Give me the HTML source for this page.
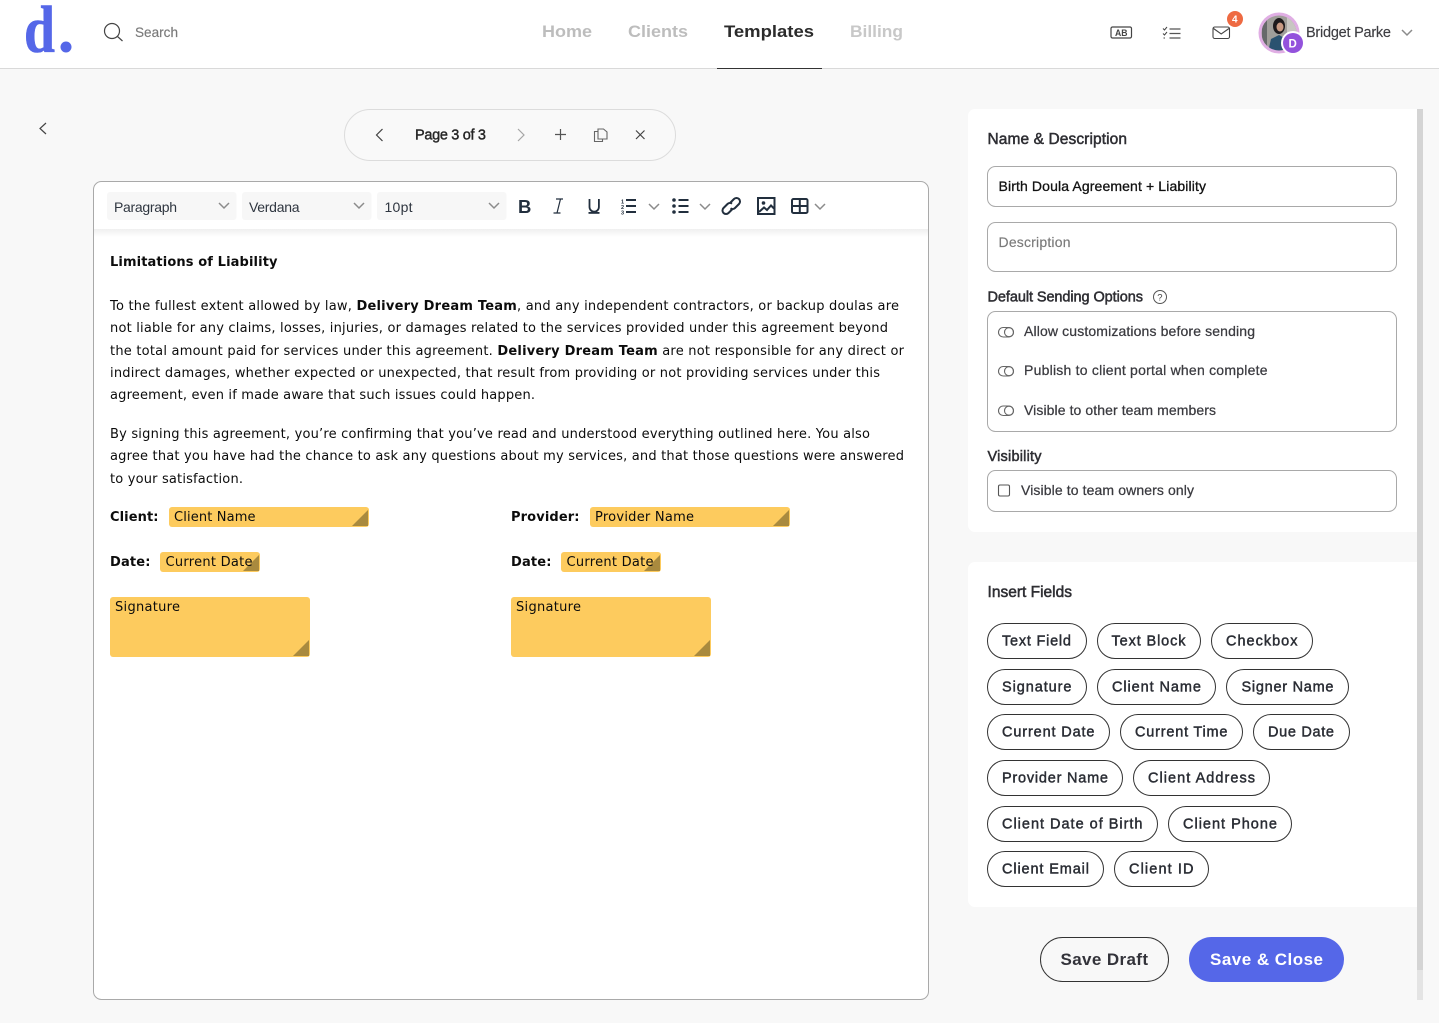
<!DOCTYPE html>
<html lang="en">
<head>
<meta charset="utf-8">
<title>Template Editor</title>
<style>
html,body{margin:0;padding:0;background:#f8f8f8;width:1439px;height:1023px;overflow:hidden}
svg{display:block;position:absolute;left:0;top:0}
text{font-family:"Liberation Sans",Arial,sans-serif;white-space:pre}
.v{font-family:"DejaVu Sans",Verdana,sans-serif;font-size:13px;fill:#0c0c0c}
.v tspan.b,.vb{font-weight:700}
.chip{fill:#fff;stroke:#333;stroke-width:1}
.ct{font-size:14.5px;fill:#2a2d34;stroke:#2a2d34;stroke-width:.45px}
.ic{fill:none;stroke:#444;stroke-width:1.2}
.tb{fill:none;stroke:#222f3e;stroke-width:2}
.chev{fill:none;stroke:#8b8b8b;stroke-width:1.5}
.lab{font-size:14.5px;fill:#2e2e33;stroke:#2e2e33;stroke-width:.5px}
.opt{font-size:14px;fill:#3a3a3f;stroke:#3a3a3f;stroke-width:.25px}
</style>
</head>
<body>
<svg width="1439" height="1023" viewBox="0 0 1439 1023" xmlns="http://www.w3.org/2000/svg">
<defs>
<linearGradient id="sh" x1="0" y1="0" x2="0" y2="1"><stop offset="0" stop-color="#000" stop-opacity=".06"/><stop offset="1" stop-color="#000" stop-opacity="0"/></linearGradient>
<clipPath id="av"><circle cx="1279" cy="33" r="17.5"/></clipPath>
</defs>
<rect width="1439" height="1023" fill="#f8f8f8"/>

<!-- header -->
<rect width="1439" height="68" fill="#fff"/>
<rect y="68" width="1439" height="1" fill="#d9d9d9"/>
<text x="24" y="52" font-size="67" textLength="31" lengthAdjust="spacingAndGlyphs" style="font-family:'Liberation Serif',serif;font-weight:700" fill="#5567e8" stroke="#5567e8" stroke-width=".6">d</text>
<circle cx="66" cy="47" r="5.500" fill="#5567e8"/>
<circle cx="112" cy="31" r="7.500" class="ic"/><path d="M117.500 36.500L122.500 41" class="ic"/>
<text x="135" y="37" font-size="14" textLength="43" lengthAdjust="spacingAndGlyphs" fill="#7a7a7a" stroke="#7a7a7a" stroke-width=".15">Search</text>

<g font-size="17" font-weight="700">
<text x="542" y="37" textLength="50" lengthAdjust="spacingAndGlyphs" fill="#bdbdbd">Home</text>
<text x="628" y="37" textLength="60" lengthAdjust="spacingAndGlyphs" fill="#bdbdbd">Clients</text>
<text x="724" y="37" textLength="90" lengthAdjust="spacingAndGlyphs" fill="#2b2b2b">Templates</text>
<text x="850" y="37" textLength="53" lengthAdjust="spacingAndGlyphs" fill="#c8c8c8">Billing</text>
</g>
<rect x="717" y="68" width="105" height="1" fill="#333"/>

<!-- header icons -->
<rect x="1111" y="27" width="20.500" height="11" rx="1.500" class="ic"/>
<text x="1115" y="36" font-size="9.500" font-weight="700" fill="#444" textLength="12.500" lengthAdjust="spacingAndGlyphs">AB</text>
<path d="M1163 28.500l1.500 1.500 2.500-3M1163 33.500l1.500 1.500 2.500-3M1163.500 38h1.500" fill="none" stroke="#444" stroke-width="1"/>
<path d="M1169.500 29h11M1169.500 33.500h11M1169.500 38h11" fill="none" stroke="#555" stroke-width="1.200"/>
<rect x="1213" y="27" width="16.500" height="11.500" rx="1.800" fill="none" stroke="#444" stroke-width="1.100"/>
<path d="M1213.500 28.500l7.700 5.500 7.800-5.500" fill="none" stroke="#444" stroke-width="1.100"/>
<circle cx="1235" cy="19" r="8" fill="#ee6a42"/>
<text x="1232" y="22.500" font-size="10" font-weight="700" fill="#fff">4</text>

<circle cx="1279" cy="33" r="20.500" fill="#e0aee4"/>
<g clip-path="url(#av)">
<rect x="1260" y="14" width="38" height="38" fill="#a09e9a"/>
<rect x="1287" y="14" width="11" height="38" fill="#c8c6c2"/>
<rect x="1262" y="20" width="5" height="32" fill="#66696a"/>
<ellipse cx="1279" cy="26" rx="6" ry="8" fill="#1e1a1d"/>
<ellipse cx="1280" cy="27" rx="3.500" ry="4.500" fill="#c89a84"/>
<path d="M1268 52l3-13 8-4 9 5 3 12z" fill="#2a5270"/>
</g>
<circle cx="1293" cy="43" r="12" fill="#fff"/>
<circle cx="1293" cy="43" r="10" fill="#9352dc"/>
<text x="1288.500" y="47.500" font-size="11.500" font-weight="700" fill="#fff">D</text>
<text x="1306" y="37" font-size="14.500" textLength="85" fill="#3e3e42" stroke="#3e3e42" stroke-width=".15">Bridget Parke</text>
<path d="M1402 30l5 5 5-5" class="chev" stroke-width="1.200"/>

<!-- back -->
<path d="M46 123l-6 5.500 6 5.500" class="ic"/>

<!-- pager -->
<rect x="344.500" y="109.500" width="331" height="51" rx="25.500" fill="#f9f9f9" stroke="#dcdcdc"/>
<path d="M382.500 129l-6 6 6 6" class="ic"/>
<text x="415" y="139.500" font-size="14.500" textLength="71" fill="#252525" stroke="#252525" stroke-width=".4">Page 3 of 3</text>
<path d="M518 129l6 6-6 6" fill="none" stroke="#a5a5a5" stroke-width="1.200"/>
<path d="M555 134.500h11M560.500 129v11" fill="none" stroke="#555" stroke-width="1.200"/>
<path d="M598 129h5.500l3.500 3v7h-9z" fill="#f9f9f9" stroke="#666" stroke-width="1.100"/>
<path d="M598 131.500h-3.500v10h8v-2.500" fill="none" stroke="#666" stroke-width="1.100"/>
<path d="M636 130.500l8.500 8.500M644.500 130.500l-8.500 8.500" fill="none" stroke="#444" stroke-width="1.200"/>

<!-- editor -->
<rect x="93.500" y="181.500" width="835" height="818" rx="8" fill="#fff" stroke="#a9a9a9"/>
<rect x="94" y="229" width="834" height="8" fill="url(#sh)"/>
<g fill="#f7f7f7">
<rect x="107" y="192" width="129.500" height="28" rx="3"/>
<rect x="242" y="192" width="129.500" height="28" rx="3"/>
<rect x="377" y="192" width="129.500" height="28" rx="3"/>
</g>
<g font-size="14" fill="#2f3640">
<text x="114" y="212" textLength="63">Paragraph</text>
<text x="249" y="212" textLength="50.500">Verdana</text>
<text x="384.500" y="212" textLength="28">10pt</text>
</g>
<path d="M219 203l5 5 5-5M354 203l5 5 5-5M489 203l5 5 5-5" class="chev"/>

<!-- toolbar -->
<text x="518" y="213" font-size="18.500" font-weight="700" fill="#222f3e">B</text>
<path d="M556 199h7M553.500 213h7M560.500 199l-3.500 14" fill="none" stroke="#222f3e" stroke-width="1.200"/>
<path d="M589.500 199v8a4.700 4.700 0 0 0 9.400 0v-8" fill="none" stroke="#222f3e" stroke-width="1.800"/>
<rect x="588.500" y="212" width="11" height="1.800" fill="#222f3e"/>
<text x="621" y="203.500" font-size="5.500" font-weight="700" fill="#222f3e">1</text>
<text x="621" y="209" font-size="5.500" font-weight="700" fill="#222f3e">2</text>
<text x="621" y="214.500" font-size="5.500" font-weight="700" fill="#222f3e">3</text>
<path d="M626 200h10M626 206h10M626 212h10" class="tb"/>
<path d="M649 204l5 5 5-5M700 204l5 5 5-5" class="chev" stroke="#999"/>
<circle cx="674" cy="200" r="1.800" fill="#222f3e"/><circle cx="674" cy="206" r="1.800" fill="#222f3e"/><circle cx="674" cy="212" r="1.800" fill="#222f3e"/>
<path d="M678.500 200h10M678.500 206h10M678.500 212h10" class="tb"/>
<path d="M730 203l4-4a3.500 3.500 0 0 1 5 5l-4 4a3.500 3.500 0 0 1-4.500.3M732.500 209l-4 4a3.500 3.500 0 0 1-5-5l4-4a3.500 3.500 0 0 1 4.500-.3" class="tb" stroke-width="1.600"/>
<rect x="758" y="198" width="16.500" height="16" class="tb"/>
<circle cx="763.500" cy="203" r="1.800" fill="#222f3e"/>
<path d="M759 212l5-4.500 3 2.500 4-4.500 3 3" class="tb" stroke-width="1.500"/>
<rect x="792" y="199" width="15.500" height="14" rx="1.500" class="tb" stroke-width="2.300"/>
<path d="M792 206h15.500M799.800 199v14" class="tb" stroke-width="2"/>
<path d="M815 204l5 5 5-5" class="chev" stroke="#999"/>

<!-- body copy -->
<text class="v vb" x="110" y="266" textLength="167.500">Limitations of Liability</text>
<text class="v" x="110" y="310" textLength="789">To the fullest extent allowed by law, <tspan class="b">Delivery Dream Team</tspan>, and any independent contractors, or backup doulas are</text>
<text class="v" x="110" y="332" textLength="778">not liable for any claims, losses, injuries, or damages related to the services provided under this agreement beyond</text>
<text class="v" x="110" y="355" textLength="794">the total amount paid for services under this agreement. <tspan class="b">Delivery Dream Team</tspan> are not responsible for any direct or</text>
<text class="v" x="110" y="377" textLength="770">indirect damages, whether expected or unexpected, that result from providing or not providing services under this</text>
<text class="v" x="110" y="399" textLength="425">agreement, even if made aware that such issues could happen.</text>
<text class="v" x="110" y="438" textLength="760">By signing this agreement, you’re confirming that you’ve read and understood everything outlined here. You also</text>
<text class="v" x="110" y="460" textLength="794">agree that you have had the chance to ask any questions about my services, and that those questions were answered</text>
<text class="v" x="110" y="483" textLength="133">to your satisfaction.</text>

<!-- merge fields -->
<text class="v vb" x="110" y="521" textLength="48.500">Client:</text>
<rect x="169" y="507" width="200" height="20" rx="3" fill="#fdcb5e"/>
<path d="M368 510v16h-16z" fill="#a98a3e"/>
<text class="v" x="174" y="521" textLength="81.500">Client Name</text>

<text class="v vb" x="511" y="521" textLength="68.500">Provider:</text>
<rect x="590" y="507" width="200" height="20" rx="3" fill="#fdcb5e"/>
<path d="M789 510v16h-16z" fill="#a98a3e"/>
<text class="v" x="595" y="521" textLength="99">Provider Name</text>

<text class="v vb" x="110" y="566" textLength="40.500">Date:</text>
<rect x="160" y="552" width="100" height="20" rx="3" fill="#fdcb5e"/>
<path d="M259 555v16h-16z" fill="#a98a3e"/>
<text class="v" x="165.500" y="566" textLength="87">Current Date</text>

<text class="v vb" x="511" y="566" textLength="40.500">Date:</text>
<rect x="561" y="552" width="100" height="20" rx="3" fill="#fdcb5e"/>
<path d="M660 555v16h-16z" fill="#a98a3e"/>
<text class="v" x="566.500" y="566" textLength="87">Current Date</text>

<rect x="110" y="597" width="200" height="60" rx="3" fill="#fdcb5e"/>
<path d="M309 640v16h-16z" fill="#a98a3e"/>
<text class="v" x="115" y="611" textLength="65">Signature</text>

<rect x="511" y="597" width="200" height="60" rx="3" fill="#fdcb5e"/>
<path d="M710 640v16h-16z" fill="#a98a3e"/>
<text class="v" x="516" y="611" textLength="65">Signature</text>

<!-- right panel -->
<rect x="1417" y="109" width="6" height="891" fill="#e4e4e4"/>
<rect x="1417" y="109" width="6" height="861" fill="#d4d4d4"/>
<path d="M975 109h442v423h-442a7 7 0 0 1-7-7v-409a7 7 0 0 1 7-7z" fill="#fff"/>
<path d="M975 562h442v345h-442a7 7 0 0 1-7-7v-331a7 7 0 0 1 7-7z" fill="#fff"/>

<text class="lab" x="987.500" y="144" textLength="139.500" style="font-size:15.500px">Name &amp; Description</text>
<rect x="987.500" y="166.500" width="409" height="40" rx="8" fill="#fff" stroke="#a9a9a9"/>
<text x="998.500" y="191" font-size="14" textLength="207.500" fill="#111" stroke="#111" stroke-width=".3">Birth Doula Agreement + Liability</text>
<rect x="987.500" y="222.500" width="409" height="49" rx="8" fill="#fff" stroke="#a9a9a9"/>
<text x="998.500" y="247" font-size="14" textLength="72" fill="#7a7a7a" stroke="#7a7a7a" stroke-width=".15">Description</text>

<text class="lab" x="987.500" y="301.500" textLength="155.500">Default Sending Options</text>
<circle cx="1160" cy="297" r="6.500" fill="none" stroke="#555" stroke-width="1"/>
<text x="1157.300" y="300.500" font-size="9.500" fill="#444">?</text>
<rect x="987.500" y="311.500" width="409" height="120" rx="8" fill="#fff" stroke="#a9a9a9"/>
<g fill="none" stroke="#666" stroke-width="1.100">
<rect x="998.500" y="327.500" width="15" height="9.500" rx="4.750"/><circle cx="1009" cy="332.200" r="4.500"/>
<rect x="998.500" y="366.500" width="15" height="9.500" rx="4.750"/><circle cx="1009" cy="371.200" r="4.500"/>
<rect x="998.500" y="406" width="15" height="9.500" rx="4.750"/><circle cx="1009" cy="410.700" r="4.500"/>
</g>
<text class="opt" x="1024" y="336" textLength="231">Allow customizations before sending</text>
<text class="opt" x="1024" y="375" textLength="243.500">Publish to client portal when complete</text>
<text class="opt" x="1024" y="415" textLength="192">Visible to other team members</text>

<text class="lab" x="987.500" y="461" textLength="54">Visibility</text>
<rect x="987.500" y="470.500" width="409" height="41" rx="8" fill="#fff" stroke="#a9a9a9"/>
<rect x="998.500" y="485" width="11" height="11" rx="1.500" fill="#fff" stroke="#555" stroke-width="1.100"/>
<text class="opt" x="1021" y="495" textLength="173">Visible to team owners only</text>

<text class="lab" x="987.500" y="597" textLength="84.500" style="font-size:15.500px">Insert Fields</text>

<!-- chips -->
<rect class="chip" x="987.500" y="623.500" width="99" height="35" rx="17.500"/><text class="ct" x="1002" y="645.500" textLength="69">Text Field</text>
<rect class="chip" x="1097.500" y="623.500" width="103" height="35" rx="17.500"/><text class="ct" x="1111.500" y="645.500" textLength="74">Text Block</text>
<rect class="chip" x="1211.500" y="623.500" width="101" height="35" rx="17.500"/><text class="ct" x="1226" y="645.500" textLength="71.500">Checkbox</text>

<rect class="chip" x="987.500" y="669.500" width="99" height="35" rx="17.500"/><text class="ct" x="1002" y="691.500" textLength="69.500">Signature</text>
<rect class="chip" x="1097.500" y="669.500" width="118" height="35" rx="17.500"/><text class="ct" x="1112" y="691.500" textLength="89">Client Name</text>
<rect class="chip" x="1226.500" y="669.500" width="122" height="35" rx="17.500"/><text class="ct" x="1241.500" y="691.500" textLength="92">Signer Name</text>

<rect class="chip" x="987.500" y="714.500" width="122" height="35" rx="17.500"/><text class="ct" x="1002" y="736.500" textLength="92.500">Current Date</text>
<rect class="chip" x="1120.500" y="714.500" width="122" height="35" rx="17.500"/><text class="ct" x="1135" y="736.500" textLength="92.500">Current Time</text>
<rect class="chip" x="1253.500" y="714.500" width="96" height="35" rx="17.500"/><text class="ct" x="1268" y="736.500" textLength="66">Due Date</text>

<rect class="chip" x="987.500" y="760.500" width="135" height="35" rx="17.500"/><text class="ct" x="1002" y="782.500" textLength="106">Provider Name</text>
<rect class="chip" x="1133.500" y="760.500" width="136" height="35" rx="17.500"/><text class="ct" x="1148" y="782.500" textLength="107">Client Address</text>

<rect class="chip" x="987.500" y="806.500" width="170" height="35" rx="17.500"/><text class="ct" x="1002" y="828.500" textLength="140.500">Client Date of Birth</text>
<rect class="chip" x="1168.500" y="806.500" width="123" height="35" rx="17.500"/><text class="ct" x="1183" y="828.500" textLength="94">Client Phone</text>

<rect class="chip" x="987.500" y="851.500" width="116" height="35" rx="17.500"/><text class="ct" x="1002" y="873.500" textLength="87">Client Email</text>
<rect class="chip" x="1114.500" y="851.500" width="94" height="35" rx="17.500"/><text class="ct" x="1129" y="873.500" textLength="64.500">Client ID</text>

<!-- footer buttons -->
<rect x="1040.500" y="937.500" width="128" height="44" rx="22" fill="#f8f8f8" stroke="#333"/>
<text x="1060.500" y="965" font-size="17" font-weight="700" textLength="87.500" fill="#33333a">Save Draft</text>
<rect x="1189" y="937" width="155" height="45" rx="22.500" fill="#5567e8"/>
<text x="1210" y="965" font-size="17" font-weight="700" textLength="113" fill="#fff">Save &amp; Close</text>
</svg>
</body>
</html>
